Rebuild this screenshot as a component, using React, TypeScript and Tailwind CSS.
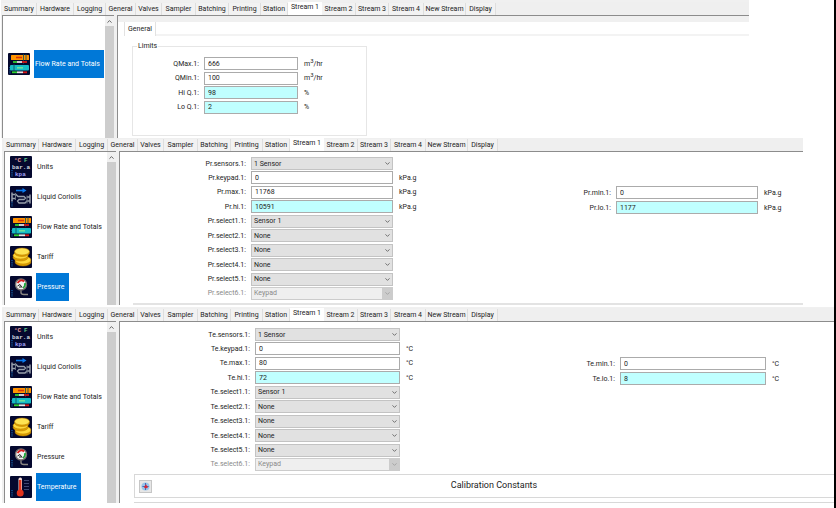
import { useId } from 'react';
import type { ReactNode } from 'react';
import { ChevronDown, ChevronUp } from 'lucide-react';
import clsx from 'clsx';

type IconName = 'units' | 'coriolis' | 'flow' | 'tariff' | 'pressure' | 'temperature';

type Item = { label: string; icon: IconName };

type FieldDef = {
  label: string;
  value: string;
  unit?: ReactNode;
  kind?: 'text' | 'limit' | 'select' | 'locked';
};

const TABS = [
  { label: 'Summary', width: 'w-[35px]' },
  { label: 'Hardware', width: 'w-[37px]' },
  { label: 'Logging', width: 'w-[32px]' },
  { label: 'General', width: 'w-[30px]' },
  { label: 'Valves', width: 'w-[26px]' },
  { label: 'Sampler', width: 'w-[34px]' },
  { label: 'Batching', width: 'w-[33px]' },
  { label: 'Printing', width: 'w-[32px]' },
  { label: 'Station', width: 'w-[27px]' },
  { label: 'Stream 1', width: 'w-[34px]' },
  { label: 'Stream 2', width: 'w-[34px]' },
  { label: 'Stream 3', width: 'w-[33px]' },
  { label: 'Stream 4', width: 'w-[35px]' },
  { label: 'New Stream', width: 'w-[42px]' },
  { label: 'Display', width: 'w-[30px]' },
];

const ITEMS: Item[] = [
  { label: 'Units', icon: 'units' },
  { label: 'Liquid Coriolis', icon: 'coriolis' },
  { label: 'Flow Rate and Totals', icon: 'flow' },
  { label: 'Tariff', icon: 'tariff' },
  { label: 'Pressure', icon: 'pressure' },
  { label: 'Temperature', icon: 'temperature' },
];

const CUBIC = (
  <>
    m<sup className="text-[6px]">3</sup>/hr
  </>
);

const FLOW_LIMITS: FieldDef[] = [
  { label: 'QMax.1:', value: '666', unit: CUBIC },
  { label: 'QMin.1:', value: '100', unit: CUBIC },
  { label: 'Hi Q.1:', value: '98', unit: '%', kind: 'limit' },
  { label: 'Lo Q.1:', value: '2', unit: '%', kind: 'limit' },
];

const PRESSURE: FieldDef[] = [
  { label: 'Pr.sensors.1:', value: '1 Sensor', kind: 'select' },
  { label: 'Pr.keypad.1:', value: '0', unit: 'kPa.g' },
  { label: 'Pr.max.1:', value: '11768', unit: 'kPa.g' },
  { label: 'Pr.hi.1:', value: '10591', unit: 'kPa.g', kind: 'limit' },
  { label: 'Pr.select1.1:', value: 'Sensor 1', kind: 'select' },
  { label: 'Pr.select2.1:', value: 'None', kind: 'select' },
  { label: 'Pr.select3.1:', value: 'None', kind: 'select' },
  { label: 'Pr.select4.1:', value: 'None', kind: 'select' },
  { label: 'Pr.select5.1:', value: 'None', kind: 'select' },
  { label: 'Pr.select6.1:', value: 'Keypad', kind: 'locked' },
];

const PRESSURE_LOW: FieldDef[] = [
  { label: 'Pr.min.1:', value: '0', unit: 'kPa.g' },
  { label: 'Pr.lo.1:', value: '1177', unit: 'kPa.g', kind: 'limit' },
];

const TEMPERATURE: FieldDef[] = [
  { label: 'Te.sensors.1:', value: '1 Sensor', kind: 'select' },
  { label: 'Te.keypad.1:', value: '0', unit: '°C' },
  { label: 'Te.max.1:', value: '80', unit: '°C' },
  { label: 'Te.hi.1:', value: '72', unit: '°C', kind: 'limit' },
  { label: 'Te.select1.1:', value: 'Sensor 1', kind: 'select' },
  { label: 'Te.select2.1:', value: 'None', kind: 'select' },
  { label: 'Te.select3.1:', value: 'None', kind: 'select' },
  { label: 'Te.select4.1:', value: 'None', kind: 'select' },
  { label: 'Te.select5.1:', value: 'None', kind: 'select' },
  { label: 'Te.select6.1:', value: 'Keypad', kind: 'locked' },
];

const TEMPERATURE_LOW: FieldDef[] = [
  { label: 'Te.min.1:', value: '0', unit: '°C' },
  { label: 'Te.lo.1:', value: '8', unit: '°C', kind: 'limit' },
];

function ItemIcon({ name }: { name: IconName }) {
  return (
    <svg viewBox="0 0 22 22" className="size-[22px] shrink-0" aria-hidden="true">
      <rect width="22" height="22" rx="1" fill="#04082e" />
      <path d="M2 14v7" stroke="#1c7fd0" strokeWidth="1" strokeDasharray="1.2 1" />
      {name === 'units' && (
        <g fontFamily="Liberation Mono, monospace" fontSize="6" fontWeight="700">
          <text x="4" y="6" fill="#f0a0a0">°C</text>
          <text x="14" y="6" fill="#5fc486">F</text>
          <text x="2" y="13" fill="#d3d8e0">bar.a</text>
          <text x="5" y="20" fill="#9c9ef4">kpa</text>
        </g>
      )}
      {name === 'coriolis' && (
        <g fill="none">
          <path d="M6 4.500h7" stroke="#0a7cf0" strokeWidth="1.600" />
          <path d="M12.500 2 16.500 4.500l-4 2.500z" fill="#0a7cf0" />
          <path d="M2 6.500v9M20 8.500v9" stroke="#a4abb6" strokeWidth="1.400" />
          <path
            d="M2 8.500h4l2 2h6l1.500 1.500-1.500 1.500H9l-1.500 1.500L9 17h6l2-2h3M2 12.500h4M17 11h3"
            stroke="#98a0ac"
            strokeWidth="1.300"
          />
          <path d="M5.500 7v7M17 9.500v8" stroke="#6b7482" />
        </g>
      )}
      {name === 'flow' && (
        <g>
          <rect x="3" y="2" width="18" height="5" rx=".5" fill="#ff9400" />
          <path d="M8 4.500h6" stroke="#d8340a" strokeWidth="1.600" />
          <path d="M15.500 1v10M18 1v7" stroke="#0a4a58" strokeWidth=".8" />
          <path d="M5 9h4" stroke="#2fd02f" strokeWidth="1.800" />
          <path d="M9 9h5" stroke="#e4e4e4" strokeWidth="1.800" />
          <path d="M14 9h5" stroke="#d81818" strokeWidth="1.800" />
          <rect x="2" y="12" width="19" height="5.500" rx="1" fill="#16bcc4" />
          <path d="M9 14.800h6" stroke="#6ce09c" strokeWidth="1.600" />
          <path d="M6 11v9" stroke="#0a4a58" strokeWidth=".8" />
          <path d="M4 19.300h5" stroke="#2fd02f" strokeWidth="1.800" />
          <path d="M9 19.300h6" stroke="#e4e4e4" strokeWidth="1.800" />
          <path d="M15 19.300h4" stroke="#d81818" strokeWidth="1.800" />
        </g>
      )}
      {name === 'tariff' && (
        <g stroke="#b87900" strokeWidth=".5">
          <ellipse cx="13" cy="16" rx="8" ry="4" fill="#dca000" />
          <ellipse cx="13" cy="14" rx="8" ry="4" fill="#ffd83a" />
          <ellipse cx="10.500" cy="11.500" rx="7.500" ry="3.500" fill="#dca000" />
          <ellipse cx="10.500" cy="9.500" rx="7.500" ry="3.500" fill="#ffd83a" />
          <ellipse cx="12" cy="7" rx="7.500" ry="3.500" fill="#dca000" />
          <ellipse cx="12" cy="5.500" rx="7.500" ry="3.500" fill="#ffe352" />
        </g>
      )}
      {name === 'pressure' && (
        <g>
          <circle cx="11" cy="8.500" r="5.500" fill="#f2f2f2" stroke="#77706c" strokeWidth="1.400" />
          <path d="M7.500 7Q11 2.500 14 5.500" fill="none" stroke="#d81818" strokeWidth="1.800" />
          <path d="M15 7q.5 3-2 5" fill="none" stroke="#1ea83a" strokeWidth="1.800" />
          <path d="M7.500 10 10 8.500l2 3M9 11h2.500" fill="none" stroke="#222" />
          <path d="M11 14.500v2q0 2 3 2h4" fill="none" stroke="#8b8783" strokeWidth="1.400" />
        </g>
      )}
      {name === 'temperature' && (
        <g>
          <rect x="8.500" y="1.500" width="3.500" height="15" rx="1.700" fill="#f3d9d3" />
          <path d="M10.200 4v12" stroke="#e2331d" strokeWidth="2.400" />
          <circle cx="10.200" cy="17" r="3.500" fill="#e2331d" />
          <path d="M14 4.500h5M14 7.500h5M14 10.500h5M14 13.500h5" stroke="#3e4672" />
        </g>
      )}
    </svg>
  );
}

function TabBar({ className }: { className: string }) {
  return (
    <div role="tablist" className={clsx('flex items-end bg-[#efefef]', className)}>
      {TABS.map(({ label, width }) => {
        const active = label === 'Stream 1';
        return (
          <button
            key={label}
            type="button"
            role="tab"
            aria-selected={active}
            className={clsx(
              'flex shrink-0 justify-center whitespace-nowrap leading-[10px]',
              width,
              active ? 'h-[13px] bg-white' : 'h-3 border-r border-[#dedede] bg-[#f2f2f2] pt-px',
            )}
          >
            {label}
          </button>
        );
      })}
    </div>
  );
}

function Sidebar({ items, selected, className }: { items: Item[]; selected: string; className: string }) {
  return (
    <nav className="flex w-28 shrink-0 overflow-hidden border-t border-l border-[#8c8c8c] bg-white">
      <ul className={clsx('flex flex-1 flex-col gap-0.5 pl-[5px]', className)}>
        {items.map(({ label, icon }) => (
          <li key={label}>
            <button type="button" className="flex h-7 items-center gap-1 whitespace-nowrap">
              <ItemIcon name={icon} />
              <span
                className={clsx(
                  'flex h-full items-center px-px',
                  label === selected && 'bg-[#0078d7] pr-1 text-white',
                )}
              >
                {label}
              </span>
            </button>
          </li>
        ))}
      </ul>
      <div className="w-[9px] bg-[#cdcdcd]">
        <button type="button" aria-label="Scroll up" className="flex h-[10px] w-full items-center justify-center bg-[#f0f0f0]">
          <ChevronUp className="size-[7px] text-[#505050]" strokeWidth={3} />
        </button>
      </div>
    </nav>
  );
}

function Field({ field, labelWidth, boxWidth }: { field: FieldDef; labelWidth: string; boxWidth: string }) {
  const id = useId();
  const { label, value, unit, kind = 'text' } = field;
  const locked = kind === 'locked';
  return (
    <div className="flex h-[13px] items-center">
      <label
        htmlFor={id}
        className={clsx('shrink-0 pr-[5px] text-right whitespace-nowrap', labelWidth, locked && 'text-[#8a8a8a]')}
      >
        {label}
      </label>
      {kind === 'select' || locked ? (
        <div className={clsx('grid h-full shrink-0', boxWidth)}>
          <select
            id={id}
            disabled={locked}
            defaultValue={value}
            className={clsx(
              'col-start-1 row-start-1 h-full w-full appearance-none border px-0.5',
              locked ? 'border-[#cccccc] bg-[#efefef] text-[#8a8a8a]' : 'border-[#c3c3c3] bg-[#e1e1e1]',
            )}
          >
            <option>{value}</option>
          </select>
          <span
            className={clsx(
              'pointer-events-none col-start-1 row-start-1 flex w-[11px] items-center justify-center justify-self-end',
              locked ? 'bg-[#cccccc] text-[#a0a0a0]' : 'text-[#606060]',
            )}
          >
            <ChevronDown className="size-[7px]" strokeWidth={3} />
          </span>
        </div>
      ) : (
        <input
          id={id}
          defaultValue={value}
          className={clsx(
            'h-full shrink-0 border border-[#ababab] px-[3px]',
            boxWidth,
            kind === 'limit' ? 'bg-[#c0ffff]' : 'bg-white',
          )}
        />
      )}
      {unit && <span className="pl-1.5 whitespace-nowrap">{unit}</span>}
    </div>
  );
}

type FieldsProps = { fields: FieldDef[]; labelWidth: string; boxWidth: string; className?: string };

function Fields({ fields, labelWidth, boxWidth, className }: FieldsProps) {
  return (
    <div className={clsx('flex flex-col justify-between', className)}>
      {fields.map((field) => (
        <Field key={field.label} field={field} labelWidth={labelWidth} boxWidth={boxWidth} />
      ))}
    </div>
  );
}

function FlowScreen() {
  return (
    <section className="mr-[85px] ml-px bg-[#f0f0f0] pt-0.5">
      <TabBar className="pl-px" />
      <div className="flex h-[123px] pl-px">
        <Sidebar items={[ITEMS[2]]} selected="Flow Rate and Totals" className="pt-[34px]" />
        <div className="ml-[3px] flex-1 border-t border-l border-[#8c8c8c] bg-[#f0f0f0] pt-1.5">
          <div className="h-full bg-white">
            <div className="flex pl-1.5">
              <button type="button" className="h-[14px] w-8 border-x border-[#e2e2e2] leading-3">
                General
              </button>
              <div className="flex-1 border-b-2 border-[#f3f3f3]" />
            </div>
            <fieldset className="mt-1 ml-3.5 h-24 w-[235px] border border-[#e6e6e6]">
              <legend className="ml-1 px-px leading-3">Limits</legend>
              <Fields
                fields={FLOW_LIMITS}
                labelWidth="w-[71px]"
                boxWidth="w-[94px]"
                className="mt-[5px] h-[57px]"
              />
            </fieldset>
          </div>
        </div>
      </div>
    </section>
  );
}

function PressureScreen() {
  return (
    <section className="mr-[31px] ml-0.5 bg-[#f0f0f0]">
      <TabBar className="pl-0.5" />
      <div className="flex h-[154px] pl-0.5">
        <Sidebar items={ITEMS.slice(0, 5)} selected="Pressure" className="pt-px" />
        <div className="ml-[3px] flex flex-1 flex-col justify-between border-t border-l border-[#8c8c8c] bg-white pt-[5px]">
          <div className="flex gap-[133px]">
            <Fields fields={PRESSURE} labelWidth="w-[131px]" boxWidth="w-[142px]" className="h-[143px] w-[310px]" />
            <Fields
              fields={PRESSURE_LOW}
              labelWidth="w-[53px]"
              boxWidth="w-[142px]"
              className="mt-[29px] h-7"
            />
          </div>
          <div className="ml-[13px] h-0.5 bg-[#e3e3e3]" />
        </div>
      </div>
    </section>
  );
}

function TemperatureScreen() {
  return (
    <section className="ml-0.5 bg-[#f0f0f0] pt-px">
      <TabBar className="pl-0.5" />
      <div className="flex h-[182px] pl-0.5">
        <Sidebar items={ITEMS} selected="Temperature" className="pt-px" />
        <div className="ml-[3px] flex flex-1 flex-col border-t border-l border-[#8c8c8c] bg-white pt-1.5">
          <div className="flex gap-[133px]">
            <Fields fields={TEMPERATURE} labelWidth="w-[135px]" boxWidth="w-[145px]" className="h-[143px] w-[310px]" />
            <Fields
              fields={TEMPERATURE_LOW}
              labelWidth="w-[57px]"
              boxWidth="w-[146px]"
              className="mt-[29px] h-7"
            />
          </div>
          <div className="mt-[3px] ml-3.5 flex h-6 items-center border border-r-0 border-[#d8d8d8] pl-1">
            <button
              type="button"
              aria-label="Calibration settings"
              className="flex size-[13px] items-center justify-center border border-[#c6c6c6] bg-[#e6e6e6]"
            >
              <svg viewBox="0 0 10 10" className="size-[9px]" aria-hidden="true">
                <circle cx="5" cy="5" r="4.500" fill="#9cc4e8" />
                <path d="M5 1v8M1.500 5h7" stroke="#3a6fc0" strokeWidth="1.200" />
                <path d="M5.500 3v4M3.500 5.500h4" stroke="#e0202c" strokeWidth="1.600" />
              </svg>
            </button>
            <h2 className="flex-1 pb-0.5 pl-0.5 text-center text-[9px]">Calibration Constants</h2>
          </div>
          <div className="mt-1 ml-3.5 h-px bg-[#d8d8d8]" />
        </div>
      </div>
    </section>
  );
}

export default function App() {
  return (
    <main className="min-h-screen border-r-2 border-black bg-white font-[Roboto,'Open_Sans',sans-serif] text-[7px] leading-[10px] text-[#1c1c1c]">
      <FlowScreen />
      <PressureScreen />
      <div className="h-0.5" />
      <TemperatureScreen />
    </main>
  );
}
